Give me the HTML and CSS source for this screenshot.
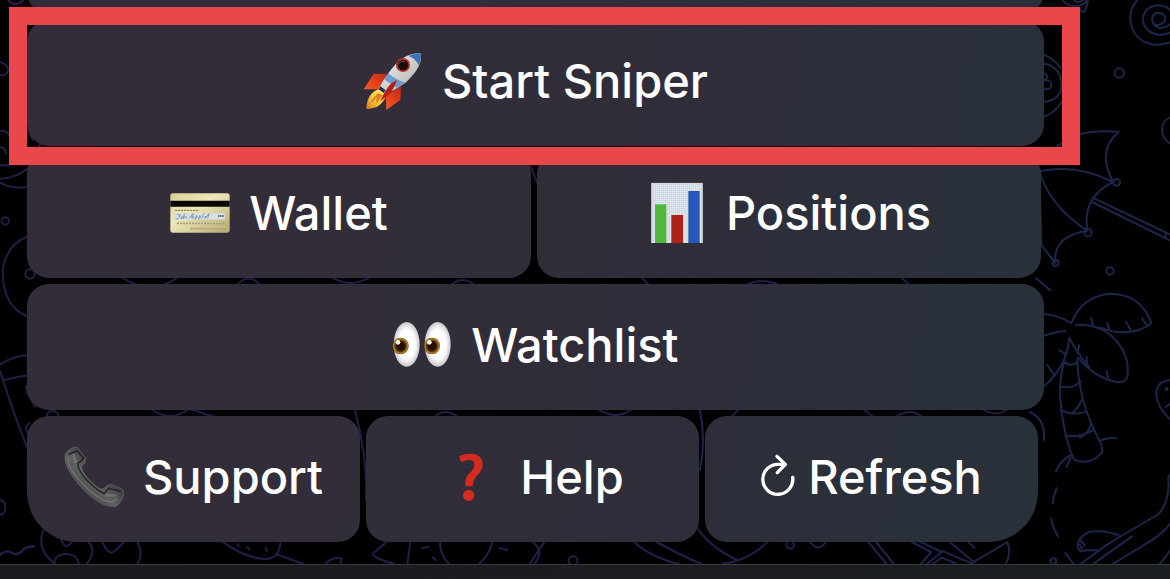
FILE: index.html
```html
<!DOCTYPE html>
<html lang="en">
<head>
    <meta charset="utf-8">
    <title>Sniper Bot</title>
    <link rel="stylesheet" href="styles.css">
</head>
<body>
    <!-- chat wallpaper -->
    <svg class="wallpaper" viewBox="0 0 1170 579" preserveAspectRatio="xMidYMid slice" aria-hidden="true">
        <defs>
            <linearGradient id="line" gradientUnits="userSpaceOnUse" x1="0" y1="0" x2="1568" y2="0">
                <stop offset="0" stop-color="#251c45"/>
                <stop offset=".6" stop-color="#221e48"/>
                <stop offset="1" stop-color="#1b2649"/>
            </linearGradient>
        </defs>
        <!-- right: swirls and umbrella -->
        <g class="blue" transform="translate(1030 0) scale(.33333)">
            <path d="M98 0Q112 20 138 18Q168 16 172 -4M150 24Q152 40 164 34Q170 24 174 0M132 2Q142 12 158 0"/>
            <path d="M372 72Q388 80 402 66Q412 48 394 40Q372 34 366 54Q366 78 390 84Q426 82 430 50Q424 18 384 16Q342 20 338 60Q346 100 388 104Q430 104 450 70M322 0Q296 28 302 68Q314 126 372 134Q440 134 470 90"/>
            <circle cx="268" cy="219" r="14"/>
            <circle cx="50" cy="254" r="14"/>
            <path d="M30 222Q46 216 50 226Q54 236 42 240M30 190Q72 190 90 226Q106 282 66 300Q48 308 30 302M30 162Q66 168 92 204M96 306Q70 344 30 354"/>
            <path d="M430 350Q396 356 396 390Q398 424 430 434"/>
            <path d="M80 442Q140 384 266 396Q198 452 250 546Q140 490 28 514Q60 620 172 692Q156 590 250 546M28 514Q30 580 34 735L76 788Q68 708 172 692M34 735Q46 750 70 782"/>
            <circle cx="260" cy="547" r="10"/><circle cx="174" cy="698" r="11"/><circle cx="77" cy="789" r="9"/>
            <path d="M194 596L430 708M186 606L430 726M402 714L410 700"/>
            <circle cx="240" cy="813" r="11"/>
        </g>
        <!-- right: palm tree -->
        <g class="blue" transform="translate(1030 285) scale(.33333)">
            <path d="M30 86Q84 88 124 114Q156 34 238 26Q334 26 364 114Q330 144 270 142Q238 140 214 128M138 120Q202 116 244 152Q302 206 292 276Q284 296 256 290Q190 276 145 218"/>
            <path d="M106 138Q68 142 38 154M40 306Q112 244 118 158Q140 204 178 246M104 226Q82 290 94 374Q106 468 132 524Q180 544 216 502Q220 490 208 466Q144 346 142 222"/>
            <path d="M104 232Q124 246 142 232M92 304Q122 314 152 290M92 376Q130 392 168 380M124 386Q150 364 154 346M106 452Q150 460 192 434M150 458Q178 442 182 418M88 196L104 206M148 180L142 204M170 216L170 246M230 260L234 278M52 240L74 272M184 98L188 122M232 114L238 136M288 110L302 134M336 100L350 120M208 468Q232 456 258 460M122 510Q88 528 78 560M122 518L110 546M80 610Q70 630 68 654M64 702Q70 732 84 754M106 804L130 836"/>
            <circle cx="410" cy="312" r="3"/>
            <path d="M430 286Q382 282 378 326Q384 378 430 410M408 366L430 348M430 566Q410 568 416 596Q414 662 382 690Q286 744 224 784L150 838M306 754L188 838M430 704Q400 748 342 780L250 836M266 750Q218 732 174 742Q136 764 144 788Q150 804 166 796L202 796M152 768L164 780M148 778L156 790M388 838L430 786"/>
            <circle cx="70" cy="829" r="9"/>
        </g>
        <!-- left edge -->
        <g class="violet" transform="scale(.33333)">
            <path d="M24 0Q46 24 70 0M0 186Q34 198 20 220Q12 230 0 224M0 392Q34 392 34 430M0 442L12 444M12 446L18 460M0 496H30M0 536Q50 534 90 500M0 548Q40 570 84 560M90 398L98 420M118 440L122 426"/>
            <circle cx="16" cy="663" r="11"/>
            <path d="M84 708Q18 736 8 810Q6 920 84 950M84 708Q130 690 180 710"/>
            <circle cx="90" cy="822" r="14"/>
            <path d="M94 808L108 796M0 1094Q40 1066 90 1066M0 1114L10 1142Q40 1132 90 1126M0 1114Q44 1250 84 1350M106 1220L84 1182Q68 1150 94 1158M84 1300Q70 1280 88 1270"/>
            <circle cx="158" cy="1250" r="18"/>
            <path d="M0 1500Q18 1504 16 1526Q14 1544 0 1544M0 1666Q16 1648 32 1658Q52 1668 66 1652Q80 1636 102 1640"/>
        </g>
        <!-- strokes showing between the button rows -->
        <g class="violet">
            <path d="M120 276Q150 298 180 276M236 286Q250 270 262 288M330 276Q350 290 372 276M448 288Q462 272 478 288M640 276L652 288M742 288Q760 274 786 288M900 276L912 288M150 408Q170 424 190 408M180 406Q262 430 345 470M432 420Q444 404 462 420M596 408Q616 422 634 408M728 420L742 406M862 408L880 422M892 420Q910 404 926 420M980 408Q1000 420 1010 406M526 150Q534 180 546 200M355 410Q368 460 366 500"/>
        </g>
        <g class="blue">
            <path d="M1030 412Q1046 420 1044 440M1036 278L1050 290M700 410Q706 440 700 470M890 5L902 8"/>
        </g>
        <!-- bottom strip -->
        <g stroke="url(#line)" transform="translate(0 520) scale(.74617 .33333)">
            <path d="M0 104Q8 86 18 100Q26 108 34 84L46 78M58 30Q48 90 74 132M82 60Q88 96 98 60M116 60Q132 90 116 132M72 132Q74 100 90 102Q104 104 106 132M138 68Q144 104 152 96Q160 82 166 66M182 60Q194 96 184 132"/>
            <path d="M296 62Q322 104 344 114Q374 130 376 66M318 72L320 78M332 82L334 88M356 84L358 92M370 102L406 132M436 132Q446 108 458 116L456 132M518 66L500 100Q498 112 528 132M550 66L546 132M590 62Q588 100 602 132M660 62Q658 98 642 132M566 84L574 80M580 112L584 120M670 84L680 90M730 64L710 132M714 66Q730 96 716 132"/>
            <ellipse cx="768" cy="122" rx="6" ry="13"/>
            <path d="M848 62Q870 110 910 132M880 66Q916 110 940 132M936 28Q954 86 990 122M1030 62Q1006 120 968 132M1086 66Q1096 98 1106 68"/>
            <ellipse cx="1059" cy="74" rx="5" ry="12"/>
            <path d="M1164 66L1188 132M1174 66L1198 132M1222 66L1248 96L1234 132M1234 66L1262 96L1242 132M1250 132L1262 112L1282 132M1262 92L1302 130L1350 66M1274 68L1304 124M1350 66Q1356 96 1348 132M1298 66L1306 84"/>
        </g>
    </svg>

    <main class="keyboard">
        <div class="row">
            <button class="key" type="button"></button>
        </div>
        <div class="row highlighted">
            <button class="key" type="button">
                <svg class="icon" viewBox="40 33 180 180" aria-hidden="true">
                    <defs>
                        <linearGradient id="hull" x1="0" y1="0" x2="1" y2="1">
                            <stop offset="0" stop-color="#4f86c8"/><stop offset=".35" stop-color="#d9dcdd"/><stop offset=".65" stop-color="#c3c5c0"/><stop offset="1" stop-color="#405f8e"/>
                        </linearGradient>
                        <linearGradient id="fin" x1="1" y1="0" x2="0" y2="1">
                            <stop offset="0" stop-color="#a51c12"/><stop offset=".5" stop-color="#e8431c"/><stop offset="1" stop-color="#f58a32"/>
                        </linearGradient>
                        <linearGradient id="flame" x1="1" y1="0" x2="0" y2="1">
                            <stop offset="0" stop-color="#fff27a"/><stop offset=".6" stop-color="#f6c335"/><stop offset="1" stop-color="#d9741c"/>
                        </linearGradient>
                    </defs>
                    <path fill="url(#fin)" d="M112 101L72 101L42 148L90 148ZM154 138L152 180L110 210L108 168Z"/>
                    <path fill="url(#flame)" d="M86 148Q52 160 50 207Q62 207 70 204Q94 202 112 164Z"/>
                    <path fill="#e57e20" d="M84 160L64 184L68 188L82 170L78 192L100 166Z"/>
                    <path fill="url(#hull)" d="M213 40Q160 36 116 100Q98 124 88 144L108 162Q140 148 168 128Q222 78 213 40Z"/>
                    <path fill="#3c72b6" d="M213 40Q194 38 176 48Q196 54 208 76Q216 56 213 40Z"/>
                    <path fill="#6d9bce" d="M116 100L104 119Q126 132 142 143L168 128Q140 121 116 100Z"/>
                    <path fill="#1c2948" d="M92 139L88 145L101 158L108 151Z"/>
                    <path fill="#b51d15" d="M142 120Q114 130 92 183Q128 164 142 120Z"/>
                    <circle cx="160" cy="75" r="21" fill="#c32d27"/>
                    <circle cx="160" cy="75" r="16" fill="#180f13"/>
                    <path d="M148 72Q154 60 166 64" stroke="#7c4944" stroke-width="3" fill="none"/>
                </svg>
                Start Sniper
            </button>
        </div>
        <div class="row halves">
            <button class="key" type="button">
                <svg class="icon" viewBox="33 9 180 180" aria-hidden="true">
                    <defs>
                        <linearGradient id="card" x1="0" y1="0" x2="1" y2="1">
                            <stop offset="0" stop-color="#d8cf91"/><stop offset=".4" stop-color="#eee8bb"/><stop offset="1" stop-color="#b5aa70"/>
                        </linearGradient>
                    </defs>
                    <rect x="34" y="40" width="178" height="118" rx="7" fill="url(#card)"/>
                    <path fill="#080806" d="M34 62H212V80H34Z"/>
                    <path d="M48 91H120" stroke="#7c7650" stroke-width="3" stroke-dasharray="7 2"/>
                    <rect x="46" y="99" width="152" height="19" fill="#d8dfe0"/>
                    <path d="M54 104H64Q56 124 50 115M66 112Q74 104 72 114Q64 120 66 112M76 101L74 115Q82 104 84 115M90 115L102 101L102 116M94 111H104M108 120L112 107Q120 108 110 115M118 120L122 107Q130 108 120 115M128 115L134 100M134 112Q144 106 138 115L150 101L146 115" stroke="#4c75ad" stroke-width="2" fill="none"/>
                    <path d="M177 108H194" stroke="#555b60" stroke-width="5" stroke-dasharray="5 1"/>
                    <path d="M54 129H200M94 145H200" stroke="#a79d70" stroke-width="7" stroke-dasharray="6 3"/>
                    <path d="M54 127H200M94 143H200" stroke="#e0d9b0" stroke-width="2" stroke-dasharray="6 3"/>
                </svg>
                Wallet
            </button>
            <button class="key" type="button">
                <svg class="icon" viewBox="24 39 180 180" aria-hidden="true">
                    <defs>
                        <pattern id="grid" width="6" height="6" patternUnits="userSpaceOnUse">
                            <rect width="6" height="6" fill="#e2e9ef"/><path d="M0 0H6M0 0V6" stroke="#b9c8d4" stroke-width="2"/>
                        </pattern>
                    </defs>
                    <rect x="37" y="39" width="154" height="180" fill="url(#grid)"/>
                    <path d="M38 219V40H190V219" stroke="#c7cdd1" stroke-width="2" fill="none"/>
                    <rect x="48" y="103" width="34" height="116" fill="#50b83a"/>
                    <rect x="97" y="135" width="35" height="84" fill="#ad2219"/>
                    <rect x="148" y="63" width="34" height="156" fill="#2558b9"/>
                </svg>
                Positions
            </button>
        </div>
        <div class="row">
            <button class="key" type="button">
                <svg class="icon" viewBox="40 15 180 180" aria-hidden="true">
                    <defs>
                        <radialGradient id="eye">
                            <stop offset=".65" stop-color="#fff"/><stop offset="1" stop-color="#c9c8ce"/>
                        </radialGradient>
                        <radialGradient id="iris">
                            <stop offset=".5" stop-color="#241004"/><stop offset=".7" stop-color="#6b430d"/><stop offset=".88" stop-color="#b88a25"/><stop offset="1" stop-color="#583b12"/>
                        </radialGradient>
                    </defs>
                    <ellipse cx="84" cy="103" rx="39" ry="67" fill="url(#eye)"/>
                    <ellipse cx="177" cy="103" rx="39" ry="67" fill="url(#eye)"/>
                    <ellipse cx="66" cy="108" rx="24" ry="25" fill="url(#iris)"/>
                    <ellipse cx="160" cy="108" rx="24" ry="25" fill="url(#iris)"/>
                    <circle cx="58" cy="97" r="7" fill="#fff"/>
                    <circle cx="152" cy="97" r="7" fill="#fff"/>
                </svg>
                Watchlist
            </button>
        </div>
        <div class="row thirds">
            <button class="key" type="button">
                <svg class="icon" viewBox="38 36 180 180" aria-hidden="true">
                    <defs>
                        <linearGradient id="phone" x1="0" y1="1" x2="1" y2="0">
                            <stop offset="0" stop-color="#282929"/><stop offset=".45" stop-color="#606161"/><stop offset=".6" stop-color="#414242"/><stop offset="1" stop-color="#242525"/>
                        </linearGradient>
                    </defs>
                    <path fill="url(#phone)" stroke="#696a6a" stroke-width="2" d="M42 58Q54 38 74 37Q82 38 85 47L103 68Q106 78 98 87Q88 91 92 105Q110 138 146 162Q158 164 166 152Q174 147 184 151L211 161Q220 167 217 180Q208 210 190 215Q160 216 126 190Q74 150 48 98Q38 76 42 58Z"/>
                    <path d="M51 58Q68 50 78 48L97 69Q88 82 79 85Q80 112 119 148Q138 166 158 176L172 160L207 169" stroke="#202121" stroke-width="4" fill="none"/>
                    <path d="M50 66Q48 94 79 130Q116 174 158 197Q184 206 198 190" stroke="#818282" stroke-width="4" fill="none" opacity=".65"/>
                    <path d="M66 58L74 83M164 181L196 181" stroke="#8a8b8b" stroke-width="7" opacity=".5"/>
                </svg>
                Support
            </button>
            <button class="key" type="button">
                <svg class="icon" viewBox="6 21 180 180" aria-hidden="true">
                    <path fill="#d42d20" d="M61 48Q76 41 94 41Q130 42 131 73Q131 91 115 106Q102 118 101 139H78Q77 113 92 99Q106 86 106 74Q106 61 91 60Q80 60 66 67Z"/>
                    <circle cx="89" cy="166" r="17" fill="#d42d20"/>
                </svg>
                Help
            </button>
            <button class="key refresh" type="button">
                <svg class="icon" viewBox="36 21 102 180" aria-hidden="true">
                    <path d="M108 73H88A45 45 0 1 0 131 112M84 49L109 73L85 98" fill="none" stroke="#fff" stroke-width="10" stroke-linecap="round" stroke-linejoin="round"/>
                </svg>
                Refresh
            </button>
        </div>
    </main>
    <footer class="input-bar"></footer>
</body>
</html>
```

FILE: styles.css
```css
* { box-sizing: border-box; }
body { display: flex; flex-direction: column; min-height: 100vh; margin: 0; background: #000; overflow: hidden; font-family: Inter, "Liberation Sans", sans-serif; }

.wallpaper { position: absolute; top: 0; left: 0; width: 100%; height: 100%; fill: none; stroke-width: 2; stroke-linecap: round; stroke-linejoin: round; }
.wallpaper path, .wallpaper circle, .wallpaper ellipse { vector-effect: non-scaling-stroke; }
.blue { stroke: #1b2649; }
.violet { stroke: #251c45; }

/* the first row is scrolled mostly out of view */
.keyboard { position: relative; display: flex; flex-direction: column; gap: 6px; margin: -112px 126px 22px 27px; }
.row { display: flex; gap: 6px; }
.halves { padding-right: 3px; }
.thirds { padding-right: 6px; }

.key { display: flex; flex: 1 1 0; align-items: center; justify-content: center; gap: 19px; min-width: 0; height: 126px; padding: 0 0 4px; border: none; border-radius: 22px; background: linear-gradient(100deg, #342d39 0%, #302d39 50%, #2c2f3a 68%, #28313a 90%) fixed; color: #fff; font-family: inherit; font-size: 47px; font-weight: 500; line-height: 58px; white-space: nowrap; cursor: pointer; }
.thirds .key:first-child { border-bottom-left-radius: 50px; }
.thirds .key:last-child { border-bottom-right-radius: 50px; }
.refresh { gap: 13px; }

.icon { flex: none; width: 60px; height: 60px; overflow: visible; }
.refresh .icon { width: 34px; }

.highlighted { position: relative; z-index: 1; }
.highlighted::after { content: ""; position: absolute; top: -13px; right: -36px; bottom: -19px; left: -18px; border: 18px solid #e9474b; pointer-events: none; }

.input-bar { position: relative; flex: 1; min-height: 15px; border-top: 1px solid #3a3a3d; background: linear-gradient(90deg, #1c1b1f, #1a1e21); }
```
